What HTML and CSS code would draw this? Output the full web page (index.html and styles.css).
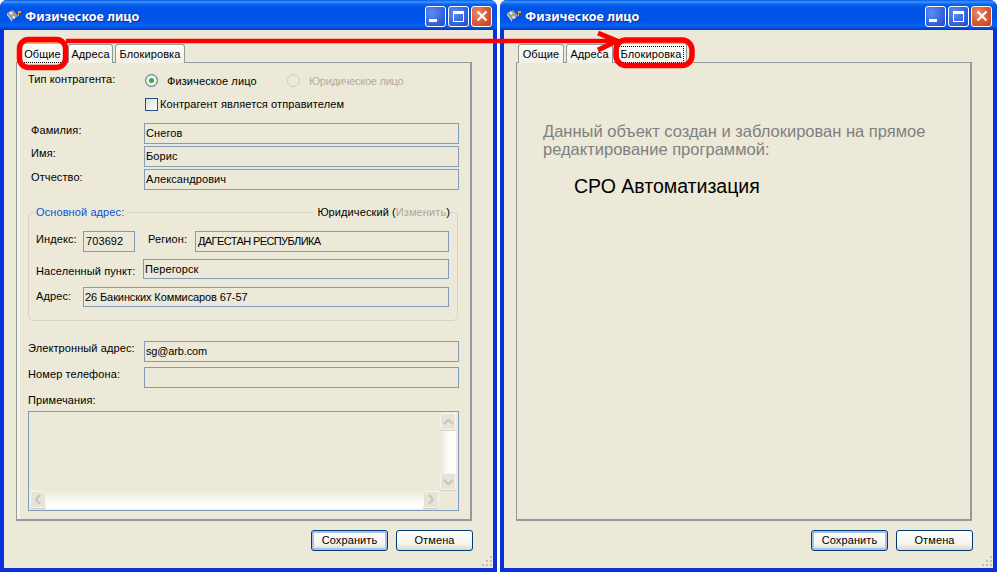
FILE: index.html
```html
<!DOCTYPE html>
<html lang="ru">
<head>
<meta charset="utf-8">
<title>Физическое лицо</title>
<link rel="stylesheet" href="styles.css">
</head>
<body>
<div class="desk">
  <section class="win">
    <header class="title">
      <svg class="ticon" width="16" height="16" viewBox="0 0 16 16"><path d="M1 5l6-3 5 6-6 4z" fill="#9a9a9a"/><path d="M3 4.500l2 2.500 2-1.300-2-2.400zM6 9l1.800 2 1.700-1.200-1.800-2.200z" fill="#e8e8e8"/><path d="M1 5l5 7v2L1 7z" fill="#d8d8d8"/><path d="M12 3h3v2h-2v3h-1z" fill="#f59a23"/></svg>
      <span class="ttext">Физическое лицо</span>
      <span class="tb tb-min"><i class="g-min"></i></span>
      <span class="tb tb-max"><i class="g-max"></i></span>
      <span class="tb tb-close"><svg width="14" height="14" viewBox="0 0 14 14"><path d="M2.500 2.500l9 9M11.500 2.500l-9 9" stroke="#fff" stroke-width="2.400"/></svg></span>
    </header>
    <div class="client">
      <nav class="tabs">
        <span class="tab tab-on tab-w1"><span class="tl tl-under">Общие</span></span>
        <span class="tab tab-w2"><span class="tl">Адреса</span></span>
        <span class="tab tab-w3"><span class="tl">Блокировка</span></span>
      </nav>
      <div class="panel">
        <div class="r r-type">
          <span class="lab lab-type">Тип контрагента:</span>
          <span class="radio"><i></i></span><span class="lab lab-fiz">Физическое лицо</span>
          <span class="radio radio-off"></span><span class="lab lab-dis">Юридическое лицо</span>
        </div>
        <div class="r r-check"><span class="cb"></span><span class="lab">Контрагент является отправителем</span></div>
        <div class="r r-fio1"><span class="lab lab-f">Фамилия:</span><span class="inp inp-w315">Снегов</span></div>
        <div class="r r-fio"><span class="lab lab-f">Имя:</span><span class="inp inp-w315">Борис</span></div>
        <div class="r r-fio"><span class="lab lab-f lab-down">Отчество:</span><span class="inp inp-w315">Александрович</span></div>
        <fieldset class="grp">
          <div class="grp-head">
            <span class="grp-t">Основной адрес:</span>
            <span class="grp-r">Юридический (<span class="dis">Изменить</span>)</span>
          </div>
          <div class="g1"><span class="lab lab-idx">Индекс:</span><span class="inp inp-idx">703692</span><span class="lab lab-reg">Регион:</span><span class="inp inp-reg">ДАГЕСТАН РЕСПУБЛИКА</span></div>
          <div class="g2"><span class="lab lab-np">Населенный пункт:</span><span class="inp inp-np">Перегорск</span></div>
          <div class="g3"><span class="lab lab-idx lab-adr">Адрес:</span><span class="inp inp-adr">26 Бакинских Коммисаров 67-57</span></div>
        </fieldset>
        <div class="r r-mail"><span class="lab lab-m">Электронный адрес:</span><span class="inp inp-w315 inp-mail">sg@arb.com</span></div>
        <div class="r r-tel"><span class="lab lab-m">Номер телефона:</span><span class="inp inp-w315"></span></div>
        <div class="lab lab-note">Примечания:</div>
        <div class="area">
          <div class="area-main"></div>
          <div class="vs">
            <span class="sb"><svg width="11" height="8" viewBox="0 0 11 8"><path d="M1 6l4.500-4 4.500 4" fill="none" stroke="#c8c8c0" stroke-width="2.200"/></svg></span>
            <span class="sb"><svg width="11" height="8" viewBox="0 0 11 8"><path d="M1 2l4.500 4 4.500-4" fill="none" stroke="#c8c8c0" stroke-width="2.200"/></svg></span>
          </div>
          <div class="hs">
            <span class="sb"><svg width="8" height="11" viewBox="0 0 8 11"><path d="M6 1L2 5.500 6 10" fill="none" stroke="#c8c8c0" stroke-width="2.200"/></svg></span>
            <span class="sb"><svg width="8" height="11" viewBox="0 0 8 11"><path d="M2 1l4 4.500L2 10" fill="none" stroke="#c8c8c0" stroke-width="2.200"/></svg></span>
          </div>
        </div>
      </div>
      <footer class="foot">
        <span class="btn btn-def">Сохранить</span>
        <span class="btn">Отмена</span>
      </footer>
      <svg class="grip" width="11" height="11" viewBox="0 0 11 11"><path d="M8 0h2v2H8zM4 4h2v2H4zM8 4h2v2H8zM0 8h2v2H0zM4 8h2v2H4zM8 8h2v2H8z" fill="#c4c1ae"/></svg>
    </div>
  </section>

  <section class="win">
    <header class="title">
      <svg class="ticon" width="16" height="16" viewBox="0 0 16 16"><path d="M1 5l6-3 5 6-6 4z" fill="#9a9a9a"/><path d="M3 4.500l2 2.500 2-1.300-2-2.400zM6 9l1.800 2 1.700-1.200-1.800-2.200z" fill="#e8e8e8"/><path d="M1 5l5 7v2L1 7z" fill="#d8d8d8"/><path d="M12 3h3v2h-2v3h-1z" fill="#f59a23"/></svg>
      <span class="ttext">Физическое лицо</span>
      <span class="tb tb-min"><i class="g-min"></i></span>
      <span class="tb tb-max"><i class="g-max"></i></span>
      <span class="tb tb-close"><svg width="14" height="14" viewBox="0 0 14 14"><path d="M2.500 2.500l9 9M11.500 2.500l-9 9" stroke="#fff" stroke-width="2.400"/></svg></span>
    </header>
    <div class="client">
      <nav class="tabs tabs-r">
        <span class="tab tab-w4"><span class="tl">Общие</span></span>
        <span class="tab tab-w6"><span class="tl">Адреса</span></span>
        <span class="tab tab-on tab-w5"><span class="tl tl-focus">Блокировка</span></span>
      </nav>
      <div class="panel panel-r">
        <p class="lock">Данный объект создан и заблокирован на прямое<br>редактирование программой:</p>
        <p class="owner">СРО Автоматизация</p>
      </div>
      <footer class="foot">
        <span class="btn btn-def">Сохранить</span>
        <span class="btn">Отмена</span>
      </footer>
      <svg class="grip" width="11" height="11" viewBox="0 0 11 11"><path d="M8 0h2v2H8zM4 4h2v2H4zM8 4h2v2H8zM0 8h2v2H0zM4 8h2v2H4zM8 8h2v2H8z" fill="#c4c1ae"/></svg>
    </div>
  </section>

  <svg class="marks" width="997" height="572" viewBox="0 0 997 572">
    <rect x="19.500" y="39.500" width="46" height="28" rx="9" fill="none" stroke="#f00" stroke-width="5.500"/>
    <rect x="616" y="40" width="76" height="25.500" rx="10" fill="none" stroke="#f00" stroke-width="5.500"/>
    <path d="M66 41H616" fill="none" stroke="#f00" stroke-width="4.500"/>
    <path d="M598 33L617 41L598 50" fill="none" stroke="#f00" stroke-width="5"/>
  </svg>
</div>
</body>
</html>
```
FILE: styles.css
```css
* { box-sizing: border-box; }
html, body { margin: 0; padding: 0; background: #fff; }
body { font: 11px/13px "Liberation Sans", Arial, sans-serif; letter-spacing: .1px; color: #000; }
.desk { position: relative; display: flex; gap: 3px; width: 997px; height: 572px; overflow: hidden; }

.win { width: 497px; height: 572px; display: flex; flex-direction: column; border-radius: 7px 7px 0 0; overflow: hidden; background: #0831d9; }
.title { height: 30px; flex: none; display: flex; align-items: center; padding: 2px 5px 0 6px;
  background: linear-gradient(180deg, #0a5be8 0, #3d95ff 2px, #0a66ee 4px, #0053e6 8px, #0054e8 20px, #0a60f0 26px, #0044d0 29px, #0038b8 30px); }
.ticon { flex: none; }
.ttext { flex: 1; margin-left: 3px; padding-top: 2px; font: bold 12.500px/16px "Noto Sans", sans-serif; letter-spacing: 0; color: #fff; text-shadow: 1px 1px 0 #0a2a90; }
.tb { width: 21px; height: 21px; margin-left: 2px; border: 1px solid #fff; border-radius: 3px; display: flex; align-items: center; justify-content: center; position: relative;
  background: radial-gradient(circle at 30% 30%, #5f8bf0 0, #3c6be0 50%, #2048c8 100%); }
.tb-close { background: radial-gradient(circle at 30% 30%, #ea8a6c 0, #dc5a34 50%, #c2401c 100%); }
.g-min { width: 8px; height: 3px; background: #fff; margin: 9px 5px 0 0; }
.g-max { width: 11px; height: 11px; border: 1px solid #fff; border-top-width: 3px; }

.client { position: relative; flex: 1; margin: 0 4px 4px; background: #ece9d8; display: flex; flex-direction: column; }
.tabs { height: 33px; flex: none; padding: 0 0 0 17px; display: flex; align-items: flex-end; gap: 2px; position: relative; z-index: 1; margin-bottom: -1px; }
.tabs-r { padding-left: 14px; }
.tab { height: 19px; border: 1px solid #919b9c; border-bottom: 0; border-radius: 3px 3px 0 0; background: linear-gradient(#fdfdfb, #f1efe6); display: flex; align-items: center; justify-content: center; }
.tab-on { height: 21px; background: #fcfcf8; border-top: 2px solid #f5b840; position: relative; }
.tab-w1 { width: 45px; }
.tab-w2 { width: 45px; }
.tab-w3 { width: 70px; }
.tab-w4 { width: 46px; }
.tab-w6 { width: 47px; }
.tab-w5 { width: 72px; }
.tl-under { border-bottom: 1px dotted #000; padding: 0 2px 1px; margin-top: 3px; margin-right: 2px; }
.tl-focus { border: 1px dotted #000; padding: 1px 2px; margin-top: 1px; }

.panel { width: 456px; height: 459px; flex: none; margin-left: 12px; border: 1px solid #919b9c; border-right-width: 2px; border-bottom-width: 2px; padding: 0 0 0 11px; background: #ece9d8; box-shadow: inset 3px 0 0 #f6f4ea; }
.panel-r { padding: 0 0 0 26px; box-shadow: none; }

.lab { white-space: nowrap; }
.r { display: flex; align-items: flex-start; }
.r-type { margin-top: 10px; height: 14px; }
.lab-type { width: 117px; }
.lab-fiz { width: 120px; margin-top: 2px; margin-left: 9px; }
.lab-dis { margin-top: 2px; margin-left: 9px; letter-spacing: -.25px; color: #b0ae9f; }
.radio { width: 13px; height: 13px; border: 1px solid #3a6ea5; border-radius: 50%; background: #f4f3ec; flex: none; margin-top: 1px; display: flex; align-items: center; justify-content: center; box-shadow: inset 0 0 2px #c0c0b8; }
.radio i { width: 5px; height: 5px; border-radius: 50%; background: #3aa84a; }
.radio-off { border-color: #cfccbc; background: #ece9d8; box-shadow: none; }
.r-check { margin-top: 11px; margin-left: 117px; height: 13px; align-items: center; gap: 2px; }
.cb { width: 13px; height: 13px; border: 1px solid #1c5180; background: linear-gradient(135deg, #dcdcd7, #fff); flex: none; }
.lab-f { width: 116px; padding-left: 3px; padding-top: 1px; }
.lab-down { padding-top: 2px; }
.r-fio1 { margin-top: 12px; height: 21px; }
.r-fio { margin-top: 2px; height: 21px; }
.inp { height: 21px; border: 1px solid #7f9db9; padding: 3px 0 0 1px; white-space: nowrap; flex: none; }
.inp-w315 { width: 315px; }
.inp-mail { letter-spacing: -.15px; }

.grp { width: 430px; height: 109px; margin: 22px 0 0; padding: 0 7px 0 7px; border: 1px solid #d5d3c3; border-radius: 5px; min-width: 0; display: block; }
.grp-head { display: flex; justify-content: space-between; margin: -7px 0 0 0; height: 14px; }
.grp-t { color: #0a50d8; background: #ece9d8; padding: 0 3px 0 0; }
.grp-r { background: #ece9d8; padding: 0 0 0 4px; }
.dis { color: #a8a698; }
.g1, .g2, .g3 { display: flex; align-items: flex-start; height: 21px; }
.g1 { margin-top: 11px; }
.g2 { margin-top: 7px; height: 20px; }
.g3 { margin-top: 8px; height: 20px; }
.lab-idx { width: 47px; margin-top: 2px; }
.lab-adr { margin-top: 3px; }
.lab-reg { width: 47px; margin: 2px 0 0 13px; }
.lab-np { width: 107px; margin-top: 6px; }
.inp-idx { width: 52px; padding-left: 2px; }
.inp-reg { width: 254px; padding-left: 2px; letter-spacing: -.6px; }
.inp-np { width: 306px; height: 20px; }
.inp-adr { width: 366px; height: 20px; letter-spacing: -.1px; }

.r-mail { margin-top: 20px; height: 21px; }
.r-tel { margin-top: 5px; height: 21px; }
.lab-m { width: 116px; padding-top: 1px; }
.lab-note { margin-top: 6px; }
.area { width: 431px; height: 100px; margin-top: 4px; border: 1px solid #7f9db9; display: grid; grid-template-columns: 1fr 16px; grid-template-rows: 1fr 18px; padding: 1px 2px 1px 1px; }
.vs { width: 16px; display: flex; flex-direction: column; justify-content: space-between; background: linear-gradient(90deg, #ece9d8, #fdfdfb 55%, #fff); margin-bottom: 1px; }
.hs { display: flex; justify-content: space-between; background: linear-gradient(#ece9d8, #fdfdfb 70%, #fff); margin-right: 1px; }
.sb { width: 16px; height: 17px; border: 1px solid #f6f5ee; border-radius: 2px; background: #e6e4d8; box-shadow: 0 1px 0 #d0cebf; display: flex; align-items: center; justify-content: center; }

.foot { height: 21px; margin: 9px 0 0 307px; display: flex; gap: 8px; }
.btn { width: 77px; height: 21px; border: 1px solid #003c74; border-radius: 3px; background: linear-gradient(#fff, #f4f3ec 70%, #dcd8c8); display: flex; align-items: center; justify-content: center; }
.btn-def { box-shadow: inset 0 0 0 2px #a9c0ea; }
.grip { position: absolute; right: 0; bottom: 1px; }

.lock { margin: 59px 0 0; font-size: 16.500px; line-height: 18px; letter-spacing: 0; color: #808080; }
.owner { margin: 18px 0 0 31px; font-size: 19.500px; line-height: 20px; letter-spacing: 0; color: #000; }

.marks { position: absolute; left: 0; top: 0; z-index: 2; pointer-events: none; }
```
